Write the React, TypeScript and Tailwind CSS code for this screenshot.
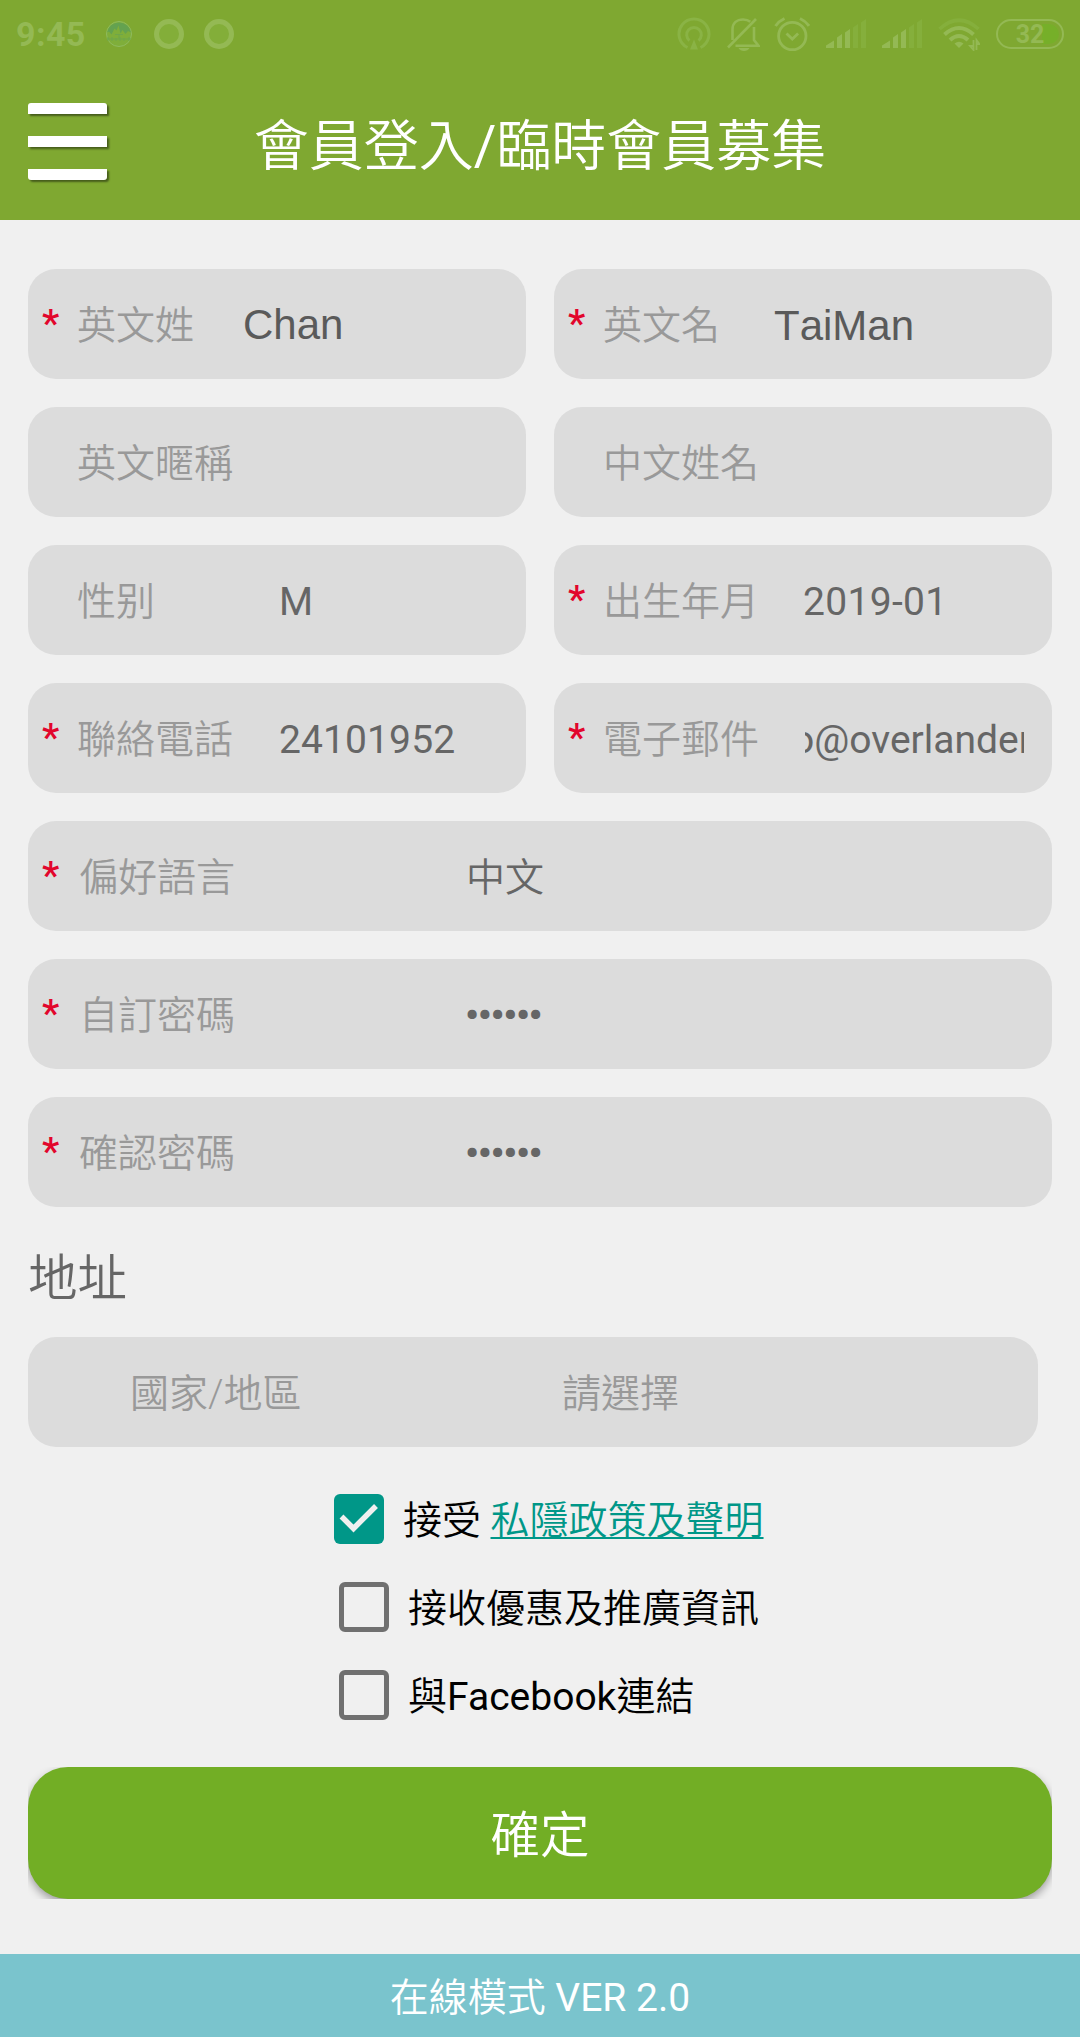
import { useState } from "react";
import type { ReactNode } from "react";
import clsx from "clsx";

/* ─── Status bar icons ─── */

const AppBadge = () => (
  <svg width="28" height="28" viewBox="0 0 28 28" className="ml-[20px]">
    <circle cx="14" cy="14" r="12.500" fill="#7fae3a" stroke="#8fbb5e" strokeWidth="1" />
    <path d="M2 12.500A12.200 12.200 0 0 1 26 12.500L23 11l-2.500 3-3-4-2 3.500-2-8-2 5-2-2-3 6-2.500-3z" fill="#64a250" />
    <path d="M10 14.500h8M14 14.500v4M2 19h24M3 17v4M7 17v4M11 18v3M15 17v4M19 18v3M24 17v4" stroke="#6fa64a" strokeWidth="1" fill="none" />
  </svg>
);

const Ring = ({ className }: { className: string }) => (
  <svg width="30" height="30" viewBox="0 0 30 30" className={className}>
    <circle cx="15" cy="15" r="12.500" fill="#83ae39" stroke="#94b954" strokeWidth="5" />
  </svg>
);

const Hotspot = () => (
  <svg width="34" height="34" viewBox="0 0 34 34" fill="none" stroke="#8ab345" strokeWidth="3">
    <path d="M10.500 30.500A15 15 0 1 1 23.500 30.500" />
    <path d="M12.500 23.500a7.300 7.300 0 1 1 9 0" />
    <path d="M17 22.500l4 10h-8z" fill="#8ab345" stroke="none" />
  </svg>
);

const BellOff = () => (
  <svg width="34" height="34" viewBox="0 0 34 34" className="ml-[15px]" fill="none" stroke="#94b954" strokeWidth="2.600">
    <path d="M30 2L2 30.500" />
    <path d="M6.500 23V12.500C6.500 6 11 2.500 17 2.500c3 0 5.500.8 7.300 2.300" />
    <path d="M28 10v13l4.500 5.800H9.500" />
    <path d="M12.500 31h11c-1 2-3 3-5.500 3s-4.500-1-5.500-3z" fill="#94b954" stroke="none" />
  </svg>
);

const Alarm = () => (
  <svg width="36" height="36" viewBox="0 0 36 36" className="ml-[14px]" fill="none" stroke="#94b954" strokeWidth="2.800">
    <circle cx="18.300" cy="20" r="13.700" />
    <path d="M12.500 17.500l5.800 5.500 5.800-5.500" />
    <path d="M1.500 10Q5 5 10.500 2.500M35 10Q31.500 5 26 2.500" strokeWidth="3" />
  </svg>
);

const Signal = ({ className }: { className: string }) => (
  <svg width="40" height="30" viewBox="0 0 40 30" className={className}>
    <path d="M0 29v-2.500l8-5V29zM11 29V18.500l5-3.500v14zM19 29V13.500l5-3.500v19z" fill="#94b954" />
    <path d="M27 29V8.500l5-3.500v24zM35 29V3.500L40 0v29z" fill="#85af3c" />
  </svg>
);

const Wifi = () => (
  <svg width="42" height="34" viewBox="0 0 42 34" className="ml-4" fill="none" strokeWidth="4">
    <path d="M1.500 12Q21 -5.500 40.500 12" stroke="#85af3c" strokeWidth="3.600" />
    <path d="M6.500 17.500Q21 4.500 35.500 17.500M12 23Q21 15 30 23" stroke="#94b954" />
    <path d="M16.500 26.500Q21 23 25.500 26.500L21 31z" fill="#94b954" />
    <path d="M35.500 23v10l-3.500-4h3.500M38.500 33V23l3 4h-3" stroke="#94b954" strokeWidth="1.800" />
  </svg>
);

const StatusBar = () => (
  <div className="flex h-[68px] items-center px-4 text-[#94b954]">
    <span className="w-[69px] text-[34px] leading-none font-bold tracking-[0.4px]">9:45</span>
    <AppBadge />
    <Ring className="ml-[21px]" />
    <Ring className="ml-5" />
    <div className="ml-auto flex items-center">
      <Hotspot />
      <BellOff />
      <Alarm />
      <Signal className="ml-4" />
      <Signal className="ml-4" />
      <Wifi />
      <div className="ml-4 flex h-[30px] w-[68px] items-center rounded-full border-[2.500px] border-[#94b954] p-[3px]">
        <div className="flex h-full w-full items-center justify-center rounded-full bg-linear-to-r from-transparent from-70% to-[#76af29] to-70%">
          <span className="text-[25px] leading-none font-bold">32</span>
        </div>
      </div>
    </div>
  </div>
);

/* ─── Form pieces ─── */

type FieldProps = {
  label: string;
  required?: boolean;
  wide?: boolean;
  children?: ReactNode;
};

const Field = ({ label, required, wide, children }: FieldProps) => (
  <div
    className={clsx(
      "flex h-[110px] items-center overflow-hidden rounded-[28px] bg-[#dcdcdc] pt-[3px] text-[39px] leading-[56px] whitespace-nowrap text-[#666]",
      wide && "col-span-2"
    )}
  >
    <span className={clsx("shrink-0 pb-[3px] pl-[14px] font-medium text-[#e2062c]", wide ? "w-[51px]" : "w-[49px]")}>
      {required && "*"}
    </span>
    <span className="shrink-0 font-[350] text-[#999]">{label}</span>
    {children}
  </div>
);

type CheckRowProps = {
  checked: boolean;
  onToggle: () => void;
  className: string;
  children: ReactNode;
};

const CheckRow = ({ checked, onToggle, className, children }: CheckRowProps) => (
  <div className={clsx("flex h-[88px] items-center text-[39px] leading-[56px] text-black", className)}>
    <button
      type="button"
      onClick={onToggle}
      className={clsx(
        "mr-[19px] flex size-[50px] items-center justify-center rounded-[6px]",
        checked ? "bg-[#009788]" : "border-[5.500px] border-[#707070]"
      )}
    >
      {checked && (
        <svg width="50" height="50" viewBox="0 0 50 50" fill="none" stroke="#f0f0f0" strokeWidth="5.500">
          <path d="M7.500 22.500L19.500 34.500L42 12" />
        </svg>
      )}
    </button>
    <span className="pt-[4px]">{children}</span>
  </div>
);

const App = () => {
  const [checks, setChecks] = useState([true, false, false]);
  const toggle = (i: number) => setChecks(checks.map((c, n) => (n === i ? !c : c)));

  return (
    <div
      lang="zh-Hant"
      className="flex h-[2037px] w-[1080px] flex-col bg-[#f0f0f0] font-[Roboto,'Noto_Sans_CJK_TC',sans-serif]"
    >
      <header className="h-[220px] bg-[#7fa831] text-white">
        <StatusBar />
        <div className="grid grid-cols-[1fr_auto_1fr] items-start pl-7">
          <div className="flex flex-col gap-[22px] pt-[35px]">
            <div className="h-[11px] w-[79px] rounded-t-[3px] bg-white shadow-[2px_2px_2px_rgba(0,0,0,0.45)]" />
            <div className="h-[11px] w-[79px] bg-white shadow-[2px_2px_2px_rgba(0,0,0,0.45)]" />
            <div className="h-[11px] w-[79px] rounded-b-[3px] bg-white shadow-[2px_2px_2px_rgba(0,0,0,0.45)]" />
          </div>
          <h1 className="-ml-7 pt-[38px] text-[55px] leading-[80px] font-[350]">
            會員登入<span className="font-normal">/</span>臨時會員募集
          </h1>
        </div>
      </header>

      <main className="px-7 pt-[49px]">
        <div className="grid grid-cols-2 gap-7">
          <Field label="英文姓" required>
            <span className="ml-[49px] -mt-[2px] font-['Liberation_Sans'] text-[42px] text-[#5a5a5a]">Chan</span>
          </Field>
          <Field label="英文名" required>
            <span className="ml-[54px] font-['Liberation_Sans'] text-[42px] text-[#5a5a5a] [font-kerning:none]">TaiMan</span>
          </Field>
          <Field label="英文暱稱" />
          <Field label="中文姓名" />
          <Field label="性别">
            <span className="ml-[124px]">M</span>
          </Field>
          <Field label="出生年月" required>
            <span className="ml-[44px] tracking-[0.300px]">2019-01</span>
          </Field>
          <Field label="聯絡電話" required>
            <span className="ml-[46px] tracking-[0.100px]">24101952</span>
          </Field>
          <Field label="電子郵件" required>
            {/* scrolled text, cut off on both sides */}
            <span className="ml-[46px] flex w-[219px] overflow-hidden">
              <span className="-ml-[13px]">o@overlander</span>
            </span>
          </Field>
          <Field label="偏好語言" required wide>
            <span className="ml-[231px] font-[350]">中文</span>
          </Field>
          <Field label="自訂密碼" required wide>
            <span className="ml-[230px] font-bold tracking-[-1.300px]">••••••</span>
          </Field>
          <Field label="確認密碼" required wide>
            <span className="ml-[230px] font-bold tracking-[-1.300px]">••••••</span>
          </Field>
        </div>

        <h2 className="mt-[36px] h-[94px] text-[49.500px] leading-[72px] font-[350] text-[#666]">地址</h2>

        <div className="flex h-[110px] w-[1010px] items-center rounded-[28px] bg-[#dcdcdc] pt-[4px] pl-[102px] text-[39px] leading-[56px] font-[350] text-[#999]">
          <span className="w-[432px]">國家/地區</span>
          <span>請選擇</span>
        </div>

        <div className="mt-[28px] flex flex-col">
          <CheckRow checked={checks[0]} onToggle={() => toggle(0)} className="pl-[306px] font-[350]">
            接受 <a className="text-[#009788] underline decoration-2 underline-offset-[3px]">私隱政策及聲明</a>
          </CheckRow>
          <CheckRow checked={checks[1]} onToggle={() => toggle(1)} className="pl-[311px] font-[350]">
            接收優惠及推廣資訊
          </CheckRow>
          <CheckRow checked={checks[2]} onToggle={() => toggle(2)} className="pl-[311px] font-[350]">
            與<span className="font-normal">Facebook</span>連結
          </CheckRow>
        </div>

        {/* the shadow stays inside the button's own box */}
        <div className="mt-[28px] overflow-hidden">
          <button
            type="button"
            className="block h-[132px] w-full rounded-[40px] bg-[#72ae25] pt-[7px] text-[49.500px] font-[350] text-white shadow-[0_4px_8px_rgba(0,0,0,0.35)]"
          >
            確定
          </button>
        </div>
      </main>

      <footer className="mt-auto h-[83px] bg-[#7ac4cd] pt-[3px] text-center text-[39px] leading-[83px] font-[350] text-white">
        在線模式 <span className="font-normal">VER 2.0</span>
      </footer>
    </div>
  );
};

export default App;
